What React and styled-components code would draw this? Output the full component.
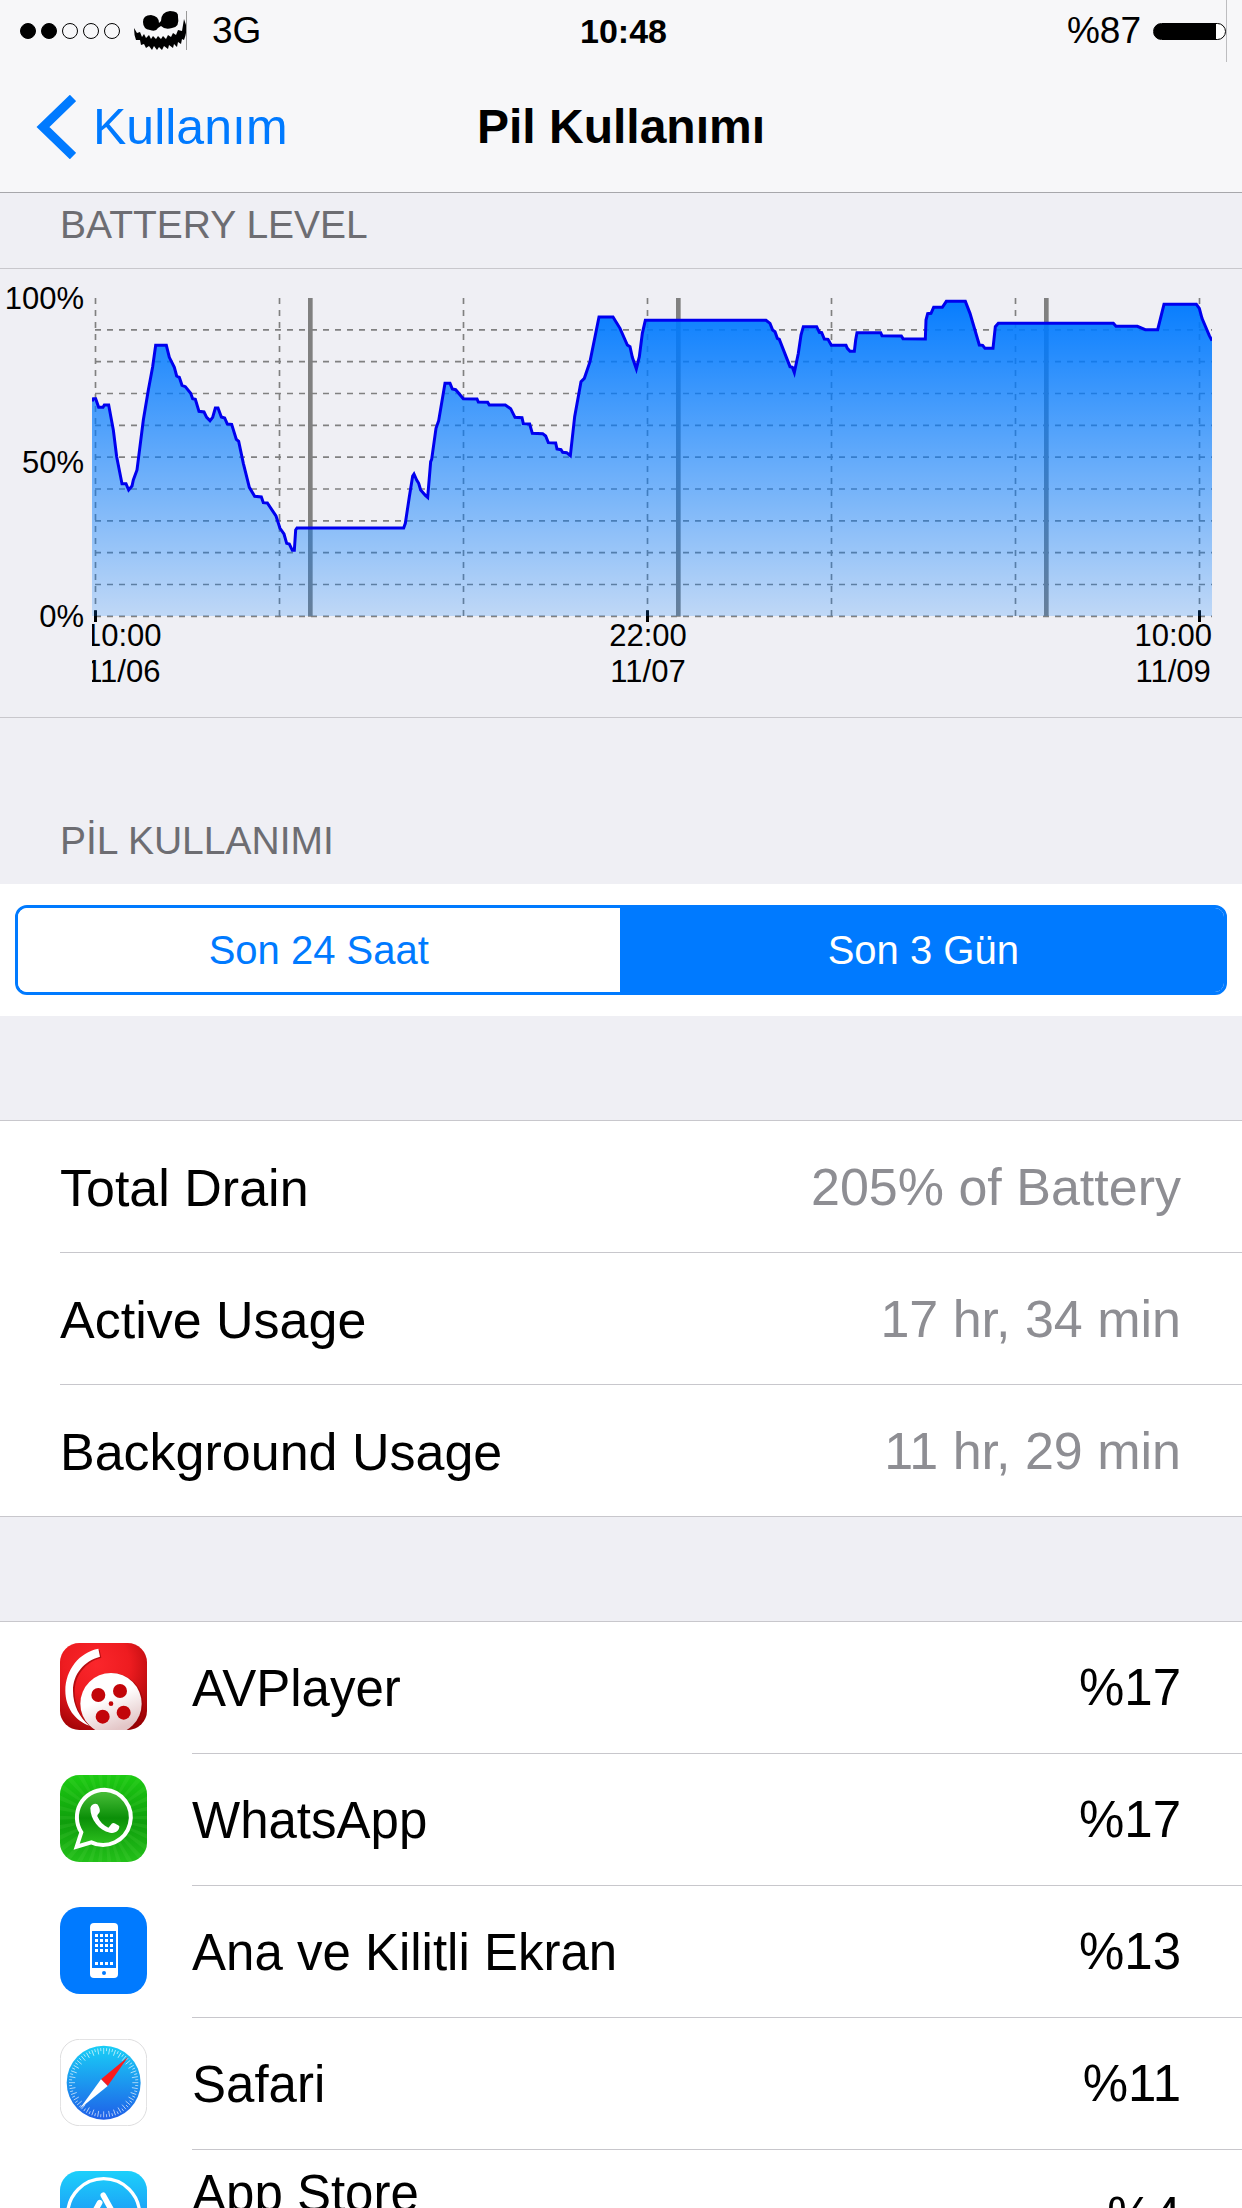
import React, { useState } from "react";
import styled, { createGlobalStyle } from "styled-components";

const BLUE = "#007aff";
const HAIRLINE = "#c8c7cc";

const GlobalStyle = createGlobalStyle`
  *, *::before, *::after { box-sizing: border-box; }
  body {
    margin: 0;
    background: #efeff4;
    color: #000;
    font-family: "Liberation Sans", Arial, Helvetica, sans-serif;
  }
`;

const Screen = styled.div`
  display: flex;
  flex-direction: column;
  height: 100vh;
  overflow: hidden;
`;

const TopBar = styled.header`
  flex: none;
  background: #f7f7f9;
  border-bottom: 1px solid #a7a7ab;
`;

const StatusBar = styled.div`
  display: grid;
  grid-template-columns: 1fr auto 1fr;
  align-items: center;
  height: 62px;
  padding: 0 15px 0 20px;
  font-size: 37px;
  line-height: 40px;
`;

const StatusGroup = styled.div`
  display: flex;
  align-items: center;
  justify-content: ${(p) => (p.$end ? "flex-end" : "flex-start")};
  gap: ${(p) => (p.$end ? "12px" : "14px")};
`;

const Signal = styled.div`
  display: flex;
  gap: 5px;
`;

const SignalDot = styled.span`
  width: 16px;
  height: 16px;
  border: 1px solid #000;
  border-radius: 50%;
  background: ${(p) => (p.$on ? "#000" : "transparent")};
`;

const Network = styled.span`
  margin-left: 11px;
`;

const Clock = styled.time`
  font-weight: 700;
  font-size: 34px;
`;

const BatteryGauge = styled.span`
  display: flex;
  align-items: center;
  height: 62px;
  border-right: 1px solid #bdbdc0;
`;

const BatteryShell = styled.span`
  display: block;
  width: 73px;
  height: 17px;
  border: 1px solid #000;
  border-radius: 9px;
  background: linear-gradient(to right, #000 87%, #fff 87%);
`;

const NavBar = styled.nav`
  display: grid;
  grid-template-columns: 1fr auto 1fr;
  align-items: center;
  height: 130px;
  padding: 0 36px;
  line-height: 60px;
`;

const BackLink = styled.a`
  display: flex;
  align-items: center;
  gap: 17px;
  color: ${BLUE};
  font-size: 50px;
  text-decoration: none;
`;

const NavTitle = styled.h1`
  margin: 0;
  font-size: 48px;
  font-weight: 700;
`;

const Content = styled.main`
  flex: 1;
  min-height: 0;
  overflow-y: auto;
  scrollbar-width: none;
`;

const SectionTitle = styled.h2`
  margin: 0;
  padding: ${(p) => (p.$first ? "9px" : "100px")} 60px 20px;
  color: #6d6d72;
  font-size: 39px;
  font-weight: 400;
  line-height: 46px;
`;

const ChartPanel = styled.div`
  display: grid;
  grid-template-columns: 84px minmax(0, 1fr);
  column-gap: 8px;
  padding: 29px 30px 27px 0;
  border: solid ${HAIRLINE};
  border-width: 1px 0;
  font-size: 31px;
  line-height: 36px;
`;

const LevelAxis = styled.div`
  display: grid;
  grid-template-rows: 164px 154px 0;
  height: 318px;
  padding-top: 1px;
  text-align: right;
`;

const LevelLabel = styled.span`
  height: 0;
  display: flex;
  align-items: center;
  justify-content: flex-end;
`;

const Plot = styled.svg`
  display: block;
  width: 100%;
  height: 318px;
  overflow: visible;
`;

const TimeAxis = styled.div`
  grid-column: 2;
  display: flex;
  justify-content: space-between;
  padding-top: 2px;
  overflow: hidden;
`;

const TimeLabel = styled.div`
  margin-left: ${(p) => (p.$clipped ? "-8px" : "0")};
  text-align: center;
`;

const SegmentBand = styled.div`
  padding: 21px 15px;
  background: #fff;
`;

const Segments = styled.div`
  display: flex;
  height: 90px;
  overflow: hidden;
  border: 3px solid ${BLUE};
  border-radius: 12px;
`;

const Segment = styled.button`
  flex: 1;
  padding: 0;
  border: 0;
  background: ${(p) => (p.$active ? BLUE : "#fff")};
  color: ${(p) => (p.$active ? "#fff" : BLUE)};
  font-family: inherit;
  font-size: 40px;

  &:not(:last-child) {
    border-right: 3px solid ${BLUE};
  }
`;

const Group = styled.ul`
  margin: 104px 0 0;
  padding: 0;
  list-style: none;
  background: #fff;
  border: solid ${HAIRLINE};
  border-width: 1px 0;
  line-height: 60px;
`;

const Item = styled.li`
  display: flex;
  gap: 45px;
  padding-left: 60px;
`;

const ItemBody = styled.div`
  flex: 1;
  display: flex;
  align-items: center;
  justify-content: space-between;
  height: 132px;
  padding-right: 61px;
  border-bottom: 1px solid ${HAIRLINE};
  font-size: ${(p) => (p.$app ? "51px" : "52px")};

  ${Item}:last-child > & {
    height: 131px;
    border-bottom: 0;
  }
`;

const Name = styled.span`
  padding-top: 3px;
  padding-bottom: ${(p) => (p.$raised ? "47px" : "0")};
`;

const Value = styled.span`
  padding-top: 1px;
  color: ${(p) => (p.$muted ? "#8e8e93" : "#000")};
`;

const AppIcon = styled.svg`
  flex: none;
  width: 87px;
  height: 87px;
  margin-top: 21px;
`;

const levels = [
  [276, 394], [280, 386], [287, 386], [296, 412], [309, 412], [313, 405], [326, 405], [340, 480], [350, 560],
  [366, 641], [378, 641], [386, 660], [396, 648], [400, 630], [411, 600], [430, 450], [445, 360], [458, 290],
  [467, 226], [499, 226], [508, 262], [523, 292], [530, 318], [538, 322], [546, 346], [556, 350], [572, 370],
  [578, 386], [586, 388], [597, 424], [612, 426], [620, 442], [630, 452], [638, 442], [646, 414], [654, 414],
  [664, 441], [674, 444], [682, 462], [695, 463], [709, 508], [716, 514], [730, 580], [748, 652], [764, 679],
  [784, 681], [790, 698], [802, 699], [828, 738], [840, 775], [852, 792], [860, 820], [868, 822], [877, 841],
  [883, 841], [887, 780], [891, 774], [1211, 774], [1216, 760], [1228, 680], [1238, 618], [1242, 612],
  [1250, 630], [1256, 640], [1262, 660], [1276, 676], [1283, 682], [1292, 575], [1295, 568], [1308, 475],
  [1316, 452], [1335, 340], [1350, 340], [1357, 357], [1367, 359], [1390, 386], [1431, 387], [1435, 396],
  [1463, 397], [1468, 405], [1516, 405], [1532, 416], [1545, 442], [1566, 443], [1570, 461], [1589, 462],
  [1597, 490], [1628, 491], [1637, 498], [1645, 518], [1667, 519], [1671, 537], [1683, 539], [1688, 547],
  [1700, 548], [1711, 557], [1724, 440], [1743, 335], [1753, 325], [1770, 275], [1797, 141], [1839, 141],
  [1860, 175], [1882, 225], [1890, 230], [1897, 262], [1909, 297], [1918, 260], [1927, 190], [1936, 151],
  [2298, 151], [2310, 160], [2318, 180], [2325, 185], [2332, 205], [2338, 208], [2370, 290], [2377, 292],
  [2383, 308], [2395, 250], [2403, 195], [2410, 170], [2450, 170], [2458, 187], [2465, 188], [2473, 207],
  [2484, 208], [2494, 226], [2538, 226], [2542, 235], [2550, 244], [2563, 244], [2567, 210], [2571, 188],
  [2642, 188], [2646, 197], [2704, 198], [2709, 206], [2776, 207], [2778, 150], [2783, 131], [2793, 130],
  [2801, 112], [2827, 112], [2839, 94], [2896, 94], [2910, 130], [2938, 225], [2948, 226], [2955, 235],
  [2979, 235], [2986, 170], [2995, 160], [3340, 160], [3348, 169], [3412, 169], [3436, 179], [3473, 179],
  [3492, 103], [3589, 103], [3598, 115], [3606, 145], [3628, 197], [3636, 212],
];

const line = levels.map((p) => p.join(",")).join(" ");
const range = (n) => Array.from({ length: n }, (_, i) => i);

function BatteryChart() {
  return (
    <Plot viewBox="276 84 3360 954" preserveAspectRatio="none" role="img" aria-label="Battery level">
      <defs>
        <linearGradient id="level" gradientUnits="userSpaceOnUse" x1="0" y1="84" x2="0" y2="1038">
          <stop offset="0" stopColor={BLUE} stopOpacity="0.98" />
          <stop offset="1" stopColor={BLUE} stopOpacity="0.2" />
        </linearGradient>
        <clipPath id="plot">
          <rect x="276" y="60" width="3360" height="1010" />
        </clipPath>
      </defs>
      <g clipPath="url(#plot)">
        <g stroke="#808080" strokeWidth="5" strokeDasharray="18 18">
          {range(10).map((i) => (
            <line key={i} x1="285" x2="3636" y1={179.5 + i * 95.5} y2={179.5 + i * 95.5} />
          ))}
          {range(7).map((i) => (
            <line key={i} x1={286.5 + i * 552} x2={286.5 + i * 552} y1="84" y2="1038" />
          ))}
        </g>
        <g stroke="#808080" strokeWidth="14">
          {range(3).map((i) => (
            <line key={i} x1={931 + i * 1104} x2={931 + i * 1104} y1="84" y2="1040" />
          ))}
        </g>
        <g stroke="#000" strokeWidth="9">
          {range(3).map((i) => (
            <line key={i} x1={286.5 + i * 1656} x2={286.5 + i * 1656} y1="1021" y2="1056" />
          ))}
        </g>
        <polygon points={`276,1038 ${line} 3636,1038`} fill="url(#level)" />
        <polyline points={line} fill="none" stroke="#0000ee" strokeWidth="9" />
      </g>
    </Plot>
  );
}

function FaceMark() {
  return (
    <svg width="53" height="40" viewBox="0 0 53 40" aria-hidden="true">
      <path d="M9 11Q9 4 17 4Q25 5 25 12L27 10Q27 1 36 0Q45 0 44 6Q46 16 38 17Q31 19 27 15L24 17Q22 21 16 19Q9 18 9 11Z" />
      <path d="M0 17L3 22L6 21L8 26L10 23L12 27L15 24L17 28L19 25L22 28L24 25L27 28L29 25L32 28L34 24L37 26L39 22L42 24L44 19L48 20L50 8L52 14Q53 22 50 29L48 28L47 33L44 31L43 36L40 33L39 37L35 34L34 38L30 35L28 39L25 36L23 39L20 35L18 39L15 35L12 37L10 33L7 34L6 29L2 29Q0 24 0 17Z" />
      <path d="M52.5 0V39" stroke="#999" />
    </svg>
  );
}

function AVPlayerIcon() {
  return (
    <AppIcon viewBox="0 0 261 261" aria-hidden="true">
      <defs>
        <radialGradient id="avRed" cx="0.42" cy="0.25" r="0.85">
          <stop offset="0" stopColor="#fb262b" />
          <stop offset="0.45" stopColor="#ee1c20" />
          <stop offset="1" stopColor="#980003" />
        </radialGradient>
        <linearGradient id="avReel" x1="0" y1="0" x2="0.4" y2="1">
          <stop offset="0.5" stopColor="#fff" />
          <stop offset="1" stopColor="#e3c6c7" />
        </linearGradient>
        <clipPath id="avClip"><rect width="261" height="261" rx="58" /></clipPath>
      </defs>
      <g clipPath="url(#avClip)">
        <rect width="261" height="261" fill="url(#avRed)" />
        <path d="M119 21C62 32 20 84 20 147C20 197 49 237 92 251C64 227 44 192 44 147C44 97 76 57 124 44Z" fill="#8c0004" opacity="0.6" />
        <path d="M115 17C58 28 16 80 16 143C16 193 45 233 88 248C60 224 39 188 39 143C39 93 72 54 120 41Z" fill="#fff" />
        <circle cx="156" cy="184" r="94" fill="#8c0004" opacity="0.5" />
        <circle cx="153" cy="182" r="92" fill="url(#avReel)" />
        <g fill="#c20509">
          <circle cx="115" cy="156" r="21" />
          <circle cx="180" cy="144" r="21" />
          <circle cx="128" cy="221" r="21" />
          <circle cx="191" cy="209" r="21" />
          <circle cx="153" cy="182" r="7" />
        </g>
      </g>
    </AppIcon>
  );
}

function WhatsAppIcon() {
  return (
    <AppIcon viewBox="0 0 261 261" aria-hidden="true">
      <defs>
        <linearGradient id="waGreen" x1="0" y1="0" x2="0" y2="1">
          <stop offset="0" stopColor="#1ccb12" />
          <stop offset="0.55" stopColor="#0f9d0c" />
          <stop offset="1" stopColor="#22c019" />
        </linearGradient>
        <linearGradient id="waBubble" x1="0" y1="0" x2="0" y2="1">
          <stop offset="0" stopColor="#4dc13c" />
          <stop offset="0.5" stopColor="#0b8f08" />
          <stop offset="1" stopColor="#2fc41f" />
        </linearGradient>
        <clipPath id="waClip"><rect width="261" height="261" rx="58" /></clipPath>
      </defs>
      <g clipPath="url(#waClip)">
        <rect width="261" height="261" fill="url(#waGreen)" />
        {range(30).map((i) => (
          <path key={i} d="M134 128L310 120V136Z" fill="#7bea62" opacity="0.12" transform={`rotate(${i * 12} 134 128)`} />
        ))}
        <path d="M134 44A83 83 0 1 1 94 202L50 215L64 172A83 83 0 0 1 134 44Z" fill="url(#waBubble)" stroke="#fff" strokeWidth="12" />
        <path d="M91 99C94 88 106 84 112 88C117 95 121 104 119 111C116 117 111 119 112 124C119 140 131 152 145 158C150 155 154 144 160 144C167 146 174 150 178 154C178 168 166 176 150 173C117 166 91 134 91 99Z" fill="#fff" />
      </g>
    </AppIcon>
  );
}

function HomeScreenIcon() {
  return (
    <AppIcon viewBox="0 0 87 87" aria-hidden="true">
      <rect width="87" height="87" rx="20" fill={BLUE} />
      <rect x="30" y="16" width="28" height="55" rx="4" fill="#fff" />
      <rect x="32" y="24" width="24" height="37" fill={BLUE} />
      {[27, 32, 37, 42, 55].map((y) =>
        [35, 40, 45, 50].map((x) => <rect key={`${x}-${y}`} x={x} y={y} width="3" height="3" fill="#fff" />)
      )}
      <circle cx="44" cy="66" r="2" fill={BLUE} />
    </AppIcon>
  );
}

function SafariIcon() {
  return (
    <AppIcon viewBox="0 0 261 261" aria-hidden="true">
      <defs>
        <linearGradient id="safariBlue" x1="0" y1="0" x2="0" y2="1">
          <stop offset="0" stopColor="#19cff6" />
          <stop offset="1" stopColor="#1f5fe8" />
        </linearGradient>
      </defs>
      <rect x="1" y="1" width="259" height="259" rx="58" fill="#fff" stroke="#dededf" strokeWidth="3" />
      <circle cx="131" cy="131" r="111" fill="url(#safariBlue)" />
      <g stroke="#fff" strokeWidth="2" opacity="0.9">
        {range(72).map((i) => (
          <path key={i} d={i % 2 ? "M131 27V36" : "M131 27V45"} transform={`rotate(${i * 5} 131 131)`} />
        ))}
      </g>
      <path d="M204 54L143 141L123 121Z" fill="#fb1b1c" />
      <path d="M59 209L123 121L143 141Z" fill="#fff" />
    </AppIcon>
  );
}

function AppStoreIcon() {
  return (
    <AppIcon viewBox="0 0 261 261" aria-hidden="true">
      <defs>
        <linearGradient id="storeBlue" x1="0" y1="0" x2="0" y2="1">
          <stop offset="0" stopColor="#1cd0fb" />
          <stop offset="1" stopColor="#1d6ff2" />
        </linearGradient>
      </defs>
      <rect width="261" height="261" rx="58" fill="url(#storeBlue)" />
      <circle cx="131" cy="131" r="108" fill="none" stroke="#fff" strokeWidth="10" />
      <g stroke="#fff" strokeWidth="17" strokeLinecap="round">
        <path d="M130 73L188 178" />
        <path d="M119 95L72 180" />
        <path d="M54 152H207" />
      </g>
    </AppIcon>
  );
}

const stats = [
  ["Total Drain", "205% of Battery"],
  ["Active Usage", "17 hr, 34 min"],
  ["Background Usage", "11 hr, 29 min"],
];

const apps = [
  { name: "AVPlayer", share: "%17", Icon: AVPlayerIcon },
  { name: "WhatsApp", share: "%17", Icon: WhatsAppIcon },
  { name: "Ana ve Kilitli Ekran", share: "%13", Icon: HomeScreenIcon },
  { name: "Safari", share: "%11", Icon: SafariIcon },
  { name: "App Store", share: "%4", Icon: AppStoreIcon, raised: true },
];

const periods = ["Son 24 Saat", "Son 3 Gün"];

export default function App() {
  const [period, setPeriod] = useState(periods[1]);
  return (
    <>
      <GlobalStyle />
      <Screen>
        <TopBar>
          <StatusBar>
            <StatusGroup>
              <Signal>
                {range(5).map((i) => (
                  <SignalDot key={i} $on={i < 2} />
                ))}
              </Signal>
              <FaceMark />
              <Network>3G</Network>
            </StatusGroup>
            <Clock>10:48</Clock>
            <StatusGroup $end>
              <span>%87</span>
              <BatteryGauge>
                <BatteryShell />
              </BatteryGauge>
            </StatusGroup>
          </StatusBar>
          <NavBar>
            <BackLink href="#usage">
              <svg width="40" height="64" viewBox="0 0 40 64" aria-hidden="true">
                <path d="M37 3L7 32L37 61" fill="none" stroke={BLUE} strokeWidth="9" />
              </svg>
              Kullanım
            </BackLink>
            <NavTitle>Pil Kullanımı</NavTitle>
          </NavBar>
        </TopBar>
        <Content>
          <SectionTitle $first>BATTERY LEVEL</SectionTitle>
          <ChartPanel>
            <LevelAxis>
              <LevelLabel>100%</LevelLabel>
              <LevelLabel>50%</LevelLabel>
              <LevelLabel>0%</LevelLabel>
            </LevelAxis>
            <BatteryChart />
            <TimeAxis>
              <TimeLabel $clipped>10:00<br />11/06</TimeLabel>
              <TimeLabel>22:00<br />11/07</TimeLabel>
              <TimeLabel>10:00<br />11/09</TimeLabel>
            </TimeAxis>
          </ChartPanel>
          <SectionTitle>PİL KULLANIMI</SectionTitle>
          <SegmentBand>
            <Segments>
              {periods.map((p) => (
                <Segment key={p} type="button" $active={p === period} aria-pressed={p === period} onClick={() => setPeriod(p)}>
                  {p}
                </Segment>
              ))}
            </Segments>
          </SegmentBand>
          <Group>
            {stats.map(([name, value]) => (
              <Item key={name}>
                <ItemBody>
                  <Name>{name}</Name>
                  <Value $muted>{value}</Value>
                </ItemBody>
              </Item>
            ))}
          </Group>
          <Group>
            {apps.map(({ name, share, Icon, raised }) => (
              <Item key={name}>
                <Icon />
                <ItemBody $app>
                  <Name $raised={raised}>{name}</Name>
                  <Value>{share}</Value>
                </ItemBody>
              </Item>
            ))}
          </Group>
        </Content>
      </Screen>
    </>
  );
}
